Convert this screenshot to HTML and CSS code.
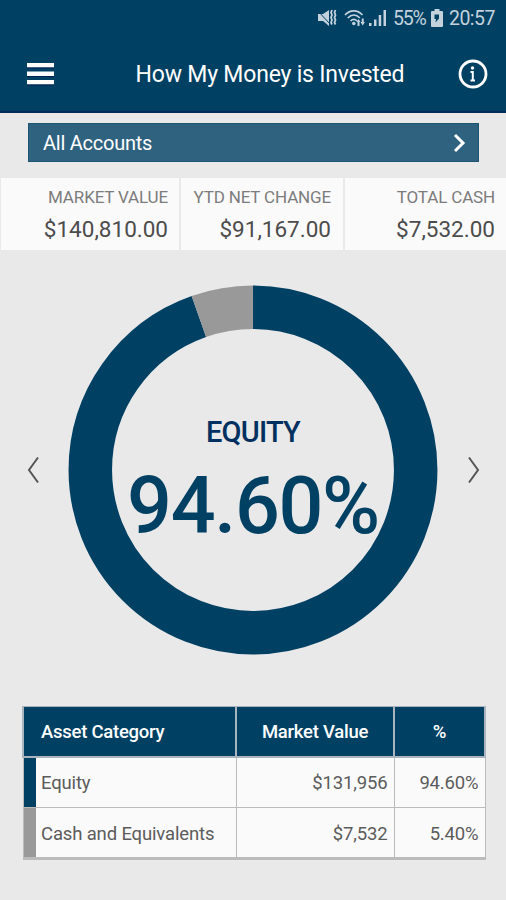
FILE: index.html
```
<!DOCTYPE html>
<html lang="en">
<head>
    <meta charset="UTF-8">
    <meta name="viewport" content="width=device-width, initial-scale=1.0">
    <title>How My Money is Invested</title>
    <link rel="stylesheet" href="styles.css">
</head>
<body>
    <header class="header">
        <div class="status-bar">
            <svg class="icon-mute" width="20" height="20" viewBox="0 0 20 20">
                <path d="M1 6h5l6-4v16l-6-5H1z" fill="#c3d2dc"/>
                <path d="M0 2l13 14" stroke="#004063" stroke-width="1"/>
                <path d="M15 2l-1 2.500 1 2.500-1 2.500 1 2.500-1 2.500 1 2M18.500 2l-1 2.500 1 2.500-1 2.500 1 2.500-1 2.500 1 2" fill="none" stroke="#c3d2dc" stroke-width="1.800"/>
            </svg>
            <svg class="icon-wifi" width="23" height="18" viewBox="0 0 23 18">
                <path d="M1 6c5-5.500 12.500-5.500 17.500 0M3.800 9c3.600-4 8.500-4 12 0M6.600 12c2-2.300 4.400-2.300 6.400 0" fill="none" stroke="#c3d2dc" stroke-width="1.700"/>
                <circle cx="9.800" cy="14.500" r="1.800" fill="#c3d2dc"/>
                <path d="M12.500 13l2-3 2 3h-1v4h-2v-4zM16.500 13h1.200V9.500h2V13h1.200l-2.200 3.500z" fill="#c3d2dc"/>
            </svg>
            <svg class="icon-signal" width="18" height="18" viewBox="0 0 18 18" fill="#c3d2dc">
                <rect x="0" y="14" width="2.500" height="3"/>
                <rect x="5" y="10.500" width="2.500" height="6.500"/>
                <rect x="9.700" y="6" width="2.500" height="11"/>
                <rect x="14.500" y="1" width="2.500" height="16"/>
            </svg>
            <span class="battery-level">55%</span>
            <svg class="icon-battery" width="12" height="18" viewBox="0 0 12 18">
                <path d="M3.500 0h5v2H11q1 0 1 1v14q0 1-1 1H1q-1 0-1-1V3q0-1 1-1h2.500z" fill="#c3d2dc"/>
                <path d="M3.500 5.500h4.500v4L4.500 13.500 5 10H3.500z" fill="#004063"/>
            </svg>
            <span class="clock">20:57</span>
        </div>
        <div class="title-bar">
            <svg class="icon-menu" width="27" height="24" viewBox="0 0 27 24">
                <path d="M0 3.200h27M0 11.700h27M0 20.200h27" stroke="#fff" stroke-width="4.600"/>
                <path d="M0 6h27M0 14.500h27M0 23h27" stroke="#002054" stroke-width="1"/>
            </svg>
            <h1>How My Money is Invested</h1>
            <svg class="icon-info" width="30" height="30" viewBox="0 0 30 30">
                <circle cx="15" cy="15" r="13" fill="none" stroke="#fff" stroke-width="2.800"/>
                <circle cx="14.500" cy="9" r="1.700" fill="#fff"/>
                <path d="M12.500 13h2.300v8M12.500 21.500h4.500" fill="none" stroke="#fff" stroke-width="2"/>
            </svg>
        </div>
    </header>

    <div class="account-select">
        <span>All Accounts</span>
        <svg width="13" height="20" viewBox="0 0 13 20">
            <path d="M2 2l8 8-8 8" fill="none" stroke="#fff" stroke-width="3"/>
        </svg>
    </div>

    <div class="summary">
        <div class="summary-item">
            <div class="label">MARKET VALUE</div>
            <div class="value">$140,810.00</div>
        </div>
        <div class="summary-item">
            <div class="label">YTD NET CHANGE</div>
            <div class="value">$91,167.00</div>
        </div>
        <div class="summary-item">
            <div class="label">TOTAL CASH</div>
            <div class="value">$7,532.00</div>
        </div>
    </div>

    <div class="chart-row">
        <svg class="arrow" width="12" height="28" viewBox="0 0 12 28">
            <path d="M11 1.500L2 14l9 12.500" fill="none" stroke="#555" stroke-width="2"/>
        </svg>
        <div class="chart">
            <svg width="370" height="370" viewBox="0 0 370 370" fill="none" stroke-width="43.500">
                <circle cx="185" cy="185" r="162.700" stroke="#004063" pathLength="100" stroke-dasharray="94.6 5.4" transform="rotate(-90 185 185)"/>
                <!-- cash slice: 5.4% of the ring, ending at 12 o'clock -->
                <circle cx="185" cy="185" r="162.700" stroke="#999" pathLength="100" stroke-dasharray="5.4 94.6" transform="rotate(-109.44 185 185)"/>
            </svg>
            <div class="chart-text">
                <div class="chart-name">EQUITY</div>
                <div class="chart-percent">94.60%</div>
            </div>
        </div>
        <svg class="arrow" width="12" height="28" viewBox="0 0 12 28">
            <path d="M1 1.500L10 14 1 26.500" fill="none" stroke="#555" stroke-width="2"/>
        </svg>
    </div>

    <table class="assets">
        <colgroup>
            <col class="col-color">
            <col>
            <col class="col-value">
            <col class="col-percent">
        </colgroup>
        <thead>
            <tr>
                <th colspan="2" class="name">Asset Category</th>
                <th>Market Value</th>
                <th>%</th>
            </tr>
        </thead>
        <tbody>
            <tr>
                <td class="color equity"></td>
                <td class="name">Equity</td>
                <td>$131,956</td>
                <td>94.60%</td>
            </tr>
            <tr>
                <td class="color cash"></td>
                <td class="name">Cash and Equivalents</td>
                <td>$7,532</td>
                <td>5.40%</td>
            </tr>
        </tbody>
    </table>
</body>
</html>
```
FILE: styles.css
```
* {
    box-sizing: border-box;
}
body {
    margin: 0;
    height: 900px;
    overflow: hidden;
    font-family: Roboto, sans-serif;
    background-color: #e9e9e9;
}
svg {
    display: block;
    flex-shrink: 0;
}
.header {
    height: 113px;
    background-color: #004063;
    border-bottom: 2px solid #002a5c;
    color: #fff;
}
.status-bar {
    display: flex;
    align-items: center;
    justify-content: flex-end;
    height: 36px;
    padding-right: 11px;
    color: #c3d2dc;
    font-size: 19.5px;
}
.icon-wifi {
    margin-left: 7px;
}
.icon-signal {
    margin-left: 2px;
}
.battery-level {
    margin-left: 6px;
    width: 33px;
    letter-spacing: -1.2px;
}
.icon-battery {
    margin-left: 5px;
}
.clock {
    margin-left: 6px;
    letter-spacing: -0.5px;
}
.title-bar {
    display: flex;
    align-items: center;
    justify-content: space-between;
    height: 76px;
    padding: 0 18px 0 27px;
}
.title-bar h1 {
    margin: 0 0 0 28px;
    font-size: 23px;
    font-weight: 400;
    letter-spacing: -0.2px;
}
.account-select {
    display: flex;
    align-items: center;
    justify-content: space-between;
    height: 39px;
    margin: 10px 27px 0 28px;
    padding: 0 12px 0 14px;
    background-color: #2f627f;
    border: 1px solid #1c5572;
    color: #fff;
    font-size: 20px;
    letter-spacing: -0.25px;
}
.summary {
    display: grid;
    grid-template-columns: 178px 162px 1fr;
    gap: 2px;
    height: 72px;
    margin-top: 16px;
    padding-left: 1px;
}
.summary-item {
    padding: 9px 12px 0 0;
    background-color: #fafafa;
    text-align: right;
    white-space: nowrap;
}
.summary-item:first-child {
    padding-right: 11px;
}
.summary-item:last-child {
    padding-right: 11px;
}
.label {
    color: #7c7c7c;
    font-size: 17px;
    line-height: 20px;
    letter-spacing: -0.15px;
}
.value {
    margin-top: 8px;
    color: #4c4c4c;
    font-size: 22.5px;
    line-height: 28px;
}
.chart-row {
    display: flex;
    align-items: center;
    justify-content: space-between;
    margin-top: 35px;
    padding: 0 26px 0 27px;
}
.chart {
    display: grid;
    place-items: center;
    margin-right: 1px;
}
.chart > * {
    grid-area: 1 / 1;
}
.chart-text {
    padding-top: 26px;
    color: #004063;
    font-weight: 500;
    text-align: center;
    white-space: nowrap;
}
.chart-name {
    color: #00305f;
    font-size: 29px;
    line-height: 34px;
    letter-spacing: -0.8px;
}
.chart-percent {
    font-size: 79px;
    line-height: 92px;
    margin-top: 11px;
    letter-spacing: -1.3px;
}
.assets {
    width: 464px;
    margin: 51px 0 0 22px;
    table-layout: fixed;
    border-collapse: collapse;
    border: 1px solid #bbb;
    border-bottom: 3px solid #bbb;
    font-size: 18.5px;
}
.col-color {
    width: 13px;
}
.col-value {
    width: 158px;
}
.col-percent {
    width: 91px;
}
.assets th {
    height: 50px;
    padding: 2px 0 0;
    background-color: #004063;
    border: 2px solid #a9b5be;
    border-top-width: 1px;
    color: #fff;
    font-weight: 500;
    letter-spacing: -0.25px;
}
.assets td {
    height: 51px;
    padding: 2px 6px 0 5px;
    background-color: #fafafa;
    border: 1px solid #bbb;
    color: #5c5c5c;
    text-align: right;
    white-space: nowrap;
    letter-spacing: -0.15px;
}
.assets .name {
    text-align: left;
}
.assets th.name {
    padding-left: 17px;
}
.assets td.name {
    border-left: none;
}
.assets td.color {
    padding: 0;
    border-right: none;
}
.assets td.equity {
    background-color: #004063;
}
.assets td.cash {
    background-color: #999;
}
```
